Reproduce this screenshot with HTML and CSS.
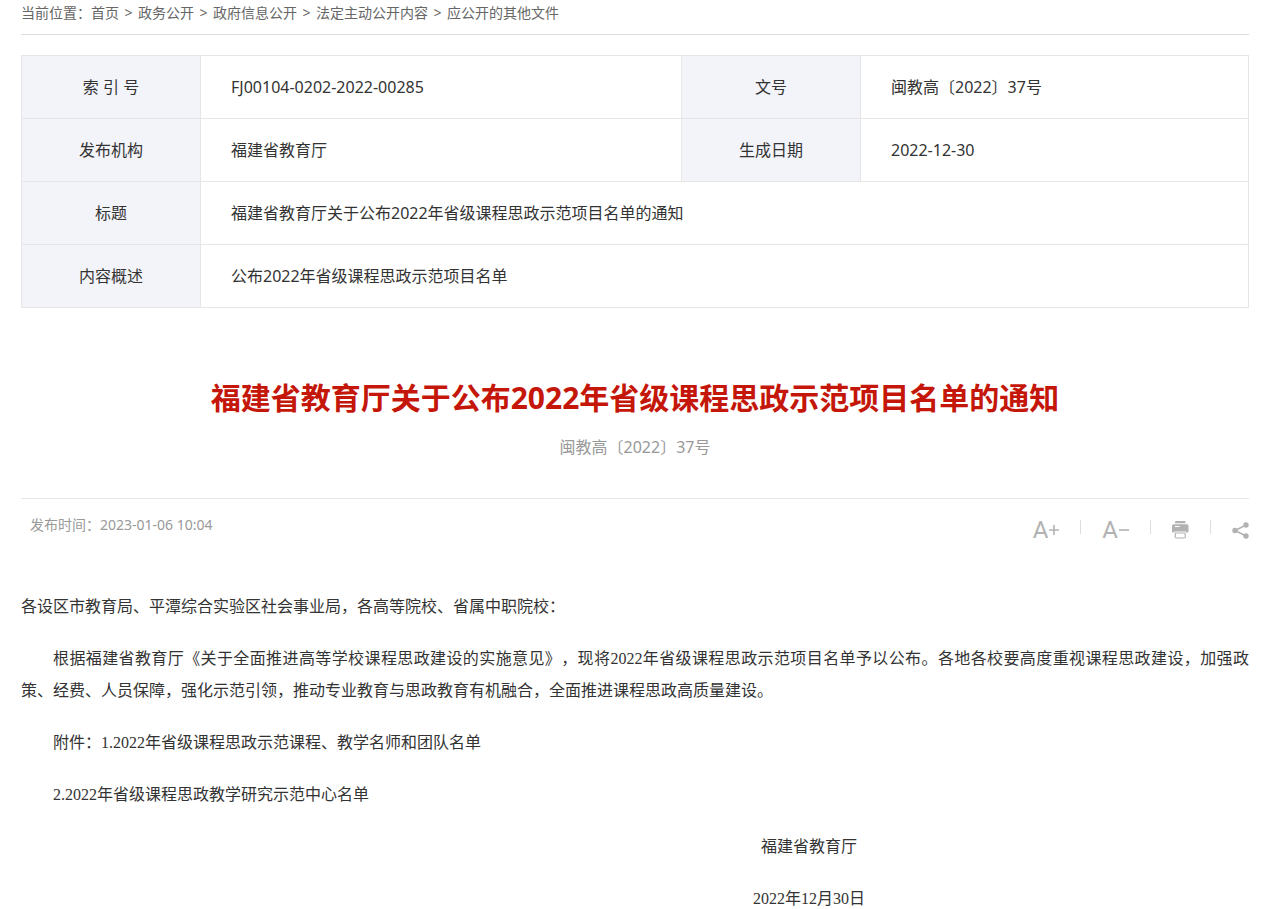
FILE: index.html
```html
<!DOCTYPE html>
<html lang="zh-CN">
<head>
  <meta charset="UTF-8" />
  <meta name="viewport" content="width=device-width, initial-scale=1.0" />
  <title>福建省教育厅关于公布2022年省级课程思政示范项目名单的通知</title>
  <link rel="stylesheet" href="styles.css">
</head>
<body>
  <nav class="crumbs">
    <span>当前位置：</span>
    <a href="#">首页</a>
    <span class="sep">&gt;</span>
    <a href="#">政务公开</a>
    <span class="sep">&gt;</span>
    <a href="#">政府信息公开</a>
    <span class="sep">&gt;</span>
    <a href="#">法定主动公开内容</a>
    <span class="sep">&gt;</span>
    <a href="#">应公开的其他文件</a>
  </nav>

  <table class="info">
    <colgroup>
      <col class="col-label">
      <col class="col-main">
      <col class="col-label">
      <col>
    </colgroup>
    <tr>
      <th scope="row">索 引 号</th>
      <td>FJ00104-0202-2022-00285</td>
      <th scope="row">文号</th>
      <td>闽教高〔2022〕37号</td>
    </tr>
    <tr>
      <th scope="row">发布机构</th>
      <td>福建省教育厅</td>
      <th scope="row">生成日期</th>
      <td>2022-12-30</td>
    </tr>
    <tr>
      <th scope="row">标题</th>
      <td colspan="3">福建省教育厅关于公布2022年省级课程思政示范项目名单的通知</td>
    </tr>
    <tr>
      <th scope="row">内容概述</th>
      <td colspan="3">公布2022年省级课程思政示范项目名单</td>
    </tr>
  </table>

  <article>
    <header class="article-head">
      <h1>福建省教育厅关于公布2022年省级课程思政示范项目名单的通知</h1>
      <p class="doc-no">闽教高〔2022〕37号</p>
    </header>

    <div class="meta">
      <p class="time">发布时间：2023-01-06 10:04</p>
      <div class="tools">
        <button type="button" class="tool" aria-label="放大字号">A<svg width="10" height="10" viewBox="0 0 10 10"><path d="M0 5h10M5 0v10" stroke="currentColor" stroke-width="1.600"/></svg></button>
        <span class="line"></span>
        <button type="button" class="tool" aria-label="缩小字号">A<svg width="10" height="10" viewBox="0 0 10 10"><path d="M0 5h10" stroke="currentColor" stroke-width="1.600"/></svg></button>
        <span class="line"></span>
        <button type="button" class="tool" aria-label="打印">
          <svg width="17" height="18" viewBox="0 0 17 18" fill="currentColor">
            <path d="M4 0h8.500q1 0 1 1v1.300H3V1q0-1 1-1z"/>
            <path fill-rule="evenodd" d="M1.500 3.300H15q1.500 0 1.500 1.500v5.700q0 1-1 1H14V10.500H2.500v1H1q-1 0-1-1V4.800Q0 3.300 1.500 3.300zM3 5v1h4.500V5z"/>
            <path d="M3.600 12h9.300l.5 3.500q0 1.500-1.500 1.500H4.600q-1.500 0-1.500-1.500z" fill="none" stroke="currentColor" stroke-width="1.200"/>
          </svg>
        </button>
        <span class="line"></span>
        <button type="button" class="tool" aria-label="分享">
          <svg width="17" height="17" viewBox="0 0 17 17" fill="currentColor">
            <path d="M14 3L3 8.500L14 14" fill="none" stroke="currentColor" stroke-width="1.500"/>
            <circle cx="14" cy="3" r="2.700"/>
            <circle cx="3" cy="8.500" r="2.700"/>
            <circle cx="14" cy="14" r="2.700"/>
          </svg>
        </button>
      </div>
    </div>

    <div class="content">
      <p class="to">各设区市教育局、平潭综合实验区社会事业局，各高等院校、省属中职院校：</p>
      <p>根据福建省教育厅《关于全面推进高等学校课程思政建设的实施意见》，现将2022年省级课程思政示范项目名单予以公布。各地各校要高度重视课程思政建设，加强政策、经费、人员保障，强化示范引领，推动专业教育与思政教育有机融合，全面推进课程思政高质量建设。</p>
      <p>附件：1.2022年省级课程思政示范课程、教学名师和团队名单</p>
      <p>2.2022年省级课程思政教学研究示范中心名单</p>
      <p class="sign">福建省教育厅</p>
      <p class="sign">2022年12月30日</p>
    </div>
  </article>
</body>
</html>
```

FILE: styles.css
```css
* { box-sizing: border-box; margin: 0; padding: 0; }
body {
  padding: 0 30px 0 21px;
  background-color: #fff;
  color: #333;
  font-family: "Noto Sans", "Noto Sans CJK SC", sans-serif;
  font-size: 16px;
  text-spacing-trim: space-all;
}
a { color: inherit; text-decoration: none; }

.crumbs {
  display: flex;
  height: 35px;
  border-bottom: 1px solid #ddd;
  color: #666;
  font-size: 14px;
  line-height: 26px;
}
.crumbs .sep { width: 19px; text-align: center; }

.info {
  width: 100%;
  margin-top: 20px;
  border-collapse: collapse;
  table-layout: fixed;
}
.info .col-label { width: 179px; }
.info .col-main { width: 481px; }
.info th, .info td {
  height: 63px;
  border: 1px solid #e6e6e6;
  line-height: 24px;
}
.info th {
  background-color: #f3f4f9;
  font-weight: normal;
  text-align: center;
}
.info td { padding: 0 30px; }

.article-head {
  padding: 68px 0 35px;
  border-bottom: 1px solid #e6e6e6;
  text-align: center;
}
.article-head h1 {
  color: #c4170a;
  font-size: 30px;
  line-height: 44px;
}
.doc-no {
  margin-top: 11px;
  color: #999;
  line-height: 32px;
}

.meta {
  display: flex;
  justify-content: space-between;
  height: 72px;
  padding: 10px 0 0 9px;
  color: #999;
}
.time { font-size: 14px; line-height: 32px; }
.tools {
  display: flex;
  align-items: flex-start;
  padding-top: 9px;
}
.tool {
  display: flex;
  align-items: center;
  gap: 1px;
  height: 24px;
  border: none;
  background: none;
  color: #b2b2b2;
  font-family: Roboto, sans-serif;
  font-size: 24px;
  line-height: 24px;
  cursor: pointer;
}
.tools .line {
  width: 1px;
  height: 14px;
  margin: 2px 21px 0;
  background-color: #ddd;
}

.content {
  padding-top: 20px;
  font-family: "Liberation Serif", "Noto Sans CJK SC", serif;
  line-height: 32px;
}
.content p {
  margin-bottom: 20px;
  text-align: justify;
  text-indent: 2em;
}
.content .to { text-indent: 0; }
.content .sign {
  padding-left: 348px;
  text-align: center;
  text-indent: 0;
}
```
